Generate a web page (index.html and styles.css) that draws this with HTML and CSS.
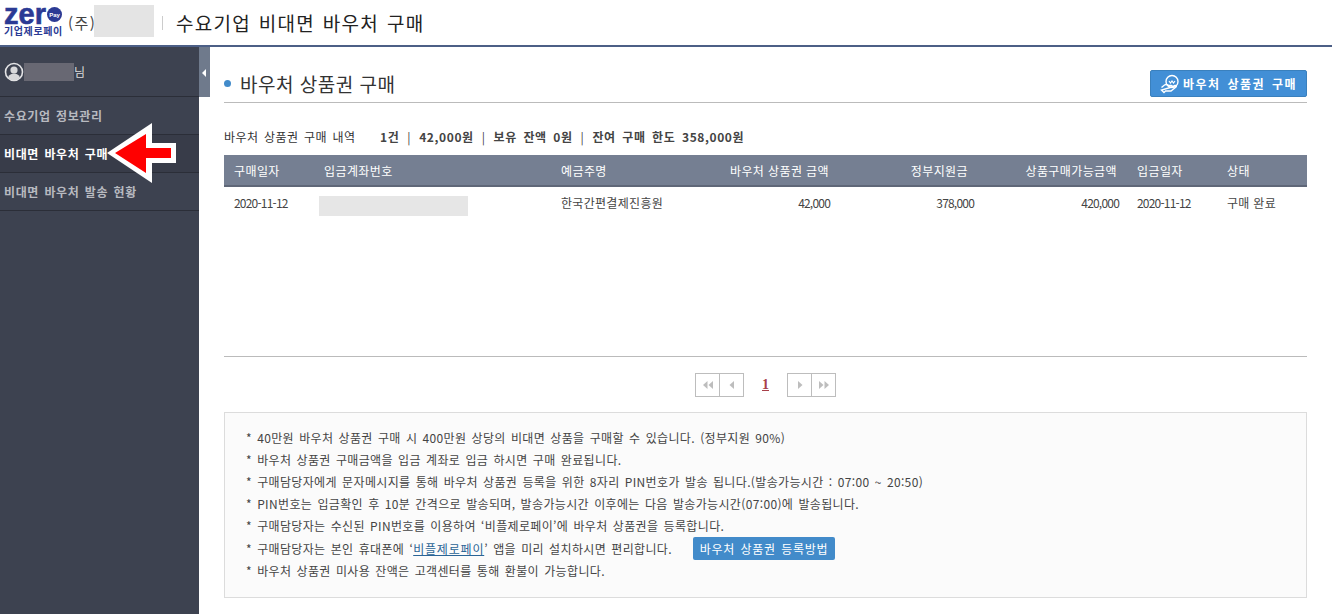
FILE: index.html
```html
<!DOCTYPE html>
<html lang="ko">
<head>
    <meta charset="UTF-8">
    <title>수요기업 비대면 바우처 구매</title>
    <link rel="stylesheet" href="styles.css">
</head>
<body>
    <div class="header">
        <div class="logo">
            <div class="logo-top">
                <span class="logo-zero">zer</span>
                <svg class="logo-pay" width="15" height="15" viewBox="0 0 15 15"><circle cx="7.500" cy="7.500" r="7.500" fill="#2b3a94"/><text x="7.500" y="9.500" font-size="6" font-weight="700" fill="#fff" text-anchor="middle" font-family="Liberation Sans">Pay</text></svg>
            </div>
            <div class="logo-sub">기업제로페이</div>
        </div>
        <div class="company">(주)<span class="company-mask"></span></div>
        <div class="header-sep"></div>
        <div class="header-title">수요기업 비대면 바우처 구매</div>
    </div>

    <div class="layout">
        <div class="sidebar">
            <div class="user">
                <svg class="user-icon" width="20" height="20" viewBox="0 0 20 20"><circle cx="10" cy="10" r="8.5" fill="#3d4250" stroke="#e4e4e6" stroke-width="1.6"/><circle cx="10" cy="8" r="3.6" fill="#d8d8da"/><path d="M4 15.5c1.2-3 3.4-4 6-4s4.800 1 6 4a8 8 0 0 1-12 0z" fill="#d8d8da"/></svg>
                <span class="user-mask"></span>
                <span class="user-suffix">님</span>
            </div>
            <div class="menu-item">수요기업 정보관리</div>
            <div class="menu-item active">비대면 바우처 구매</div>
            <div class="menu-item">비대면 바우처 발송 현황</div>
            <div class="side-toggle"><span class="toggle-arrow"></span></div>
        </div>

        <div class="main">
            <div class="title-row">
                <h1 class="page-title"><span class="title-dot"></span>바우처 상품권 구매</h1>
                <button class="buy-btn">
                    <svg width="20" height="20" viewBox="0 0 20 20" fill="none" stroke="#fff" stroke-width="1.4"><circle cx="12" cy="7.500" r="6"/><path d="M9 7l1.500 2 1.500-2 1.500 2 1.500-2" stroke-width="1.200"/><path d="M1.500 13.500l3-2.500c1.500-.8 3-.3 4 .4h3c1 0 1 1.600 0 1.600H8.500M12 13l3-1.500c1-.4 1.800.8 1 1.500l-5 4H5.500l-1.500 1.500-2.500-2.500z"/></svg>
                    바우처 상품권 구매
                </button>
            </div>

            <div class="summary">
                <span class="summary-label">바우처 상품권 구매 내역</span>
                <span class="summary-data">1건<span class="sep">|</span>42,000원<span class="sep">|</span>보유 잔액 0원<span class="sep">|</span>잔여 구매 한도 358,000원</span>
            </div>

            <div class="table-wrap">
                <table class="list-table">
                    <thead>
                        <tr>
                            <th class="col-date">구매일자</th>
                            <th class="col-account">입금계좌번호</th>
                            <th class="col-owner">예금주명</th>
                            <th class="col-amount num">바우처 상품권 금액</th>
                            <th class="col-support num">정부지원금</th>
                            <th class="col-total num">상품구매가능금액</th>
                            <th class="col-paid">입금일자</th>
                            <th class="col-state">상태</th>
                        </tr>
                    </thead>
                    <tbody>
                        <tr>
                            <td class="digits">2020-11-12</td>
                            <td><span class="account-mask"></span></td>
                            <td>한국간편결제진흥원</td>
                            <td class="num digits">42,000</td>
                            <td class="num digits">378,000</td>
                            <td class="num digits">420,000</td>
                            <td class="digits col-paid">2020-11-12</td>
                            <td class="col-state">구매 완료</td>
                        </tr>
                    </tbody>
                </table>
            </div>

            <div class="pager">
                <div class="page-group">
                    <span class="page-btn"><svg width="12" height="10" viewBox="0 0 12 10" fill="#bdbdbd"><path d="M5.500 1v8L1 5zM11 1v8L6.500 5z"/></svg></span>
                    <span class="page-btn"><svg width="12" height="10" viewBox="0 0 12 10" fill="#bdbdbd"><path d="M8 1v8L3.500 5z"/></svg></span>
                </div>
                <a class="page-num">1</a>
                <div class="page-group">
                    <span class="page-btn"><svg width="12" height="10" viewBox="0 0 12 10" fill="#bdbdbd"><path d="M4 1v8l4.500-4z"/></svg></span>
                    <span class="page-btn"><svg width="12" height="10" viewBox="0 0 12 10" fill="#bdbdbd"><path d="M1 1v8l4.500-4zM6.500 1v8L11 5z"/></svg></span>
                </div>
            </div>

            <div class="notice">
                <p>* 40만원 바우처 상품권 구매 시 400만원 상당의 비대면 상품을 구매할 수 있습니다. (정부지원 90%)</p>
                <p>* 바우처 상품권 구매금액을 입금 계좌로 입금 하시면 구매 완료됩니다.</p>
                <p>* 구매담당자에게 문자메시지를 통해 바우처 상품권 등록을 위한 8자리 PIN번호가 발송 됩니다.(발송가능시간 : 07:00 ~ 20:50)</p>
                <p>* PIN번호는 입금확인 후 10분 간격으로 발송되며, 발송가능시간 이후에는 다음 발송가능시간(07:00)에 발송됩니다.</p>
                <p>* 구매담당자는 수신된 PIN번호를 이용하여 ‘비플제로페이’에 바우처 상품권을 등록합니다.</p>
                <p class="notice-btn-row">* 구매담당자는 본인 휴대폰에 ‘<a class="notice-link">비플제로페이</a>’ 앱을 미리 설치하시면 편리합니다.<button class="guide-btn">바우처 상품권 등록방법</button></p>
                <p>* 바우처 상품권 미사용 잔액은 고객센터를 통해 환불이 가능합니다.</p>
            </div>
        </div>
    </div>

    <svg class="red-arrow" width="70" height="61" viewBox="0 0 70 61"><path d="M0 30L45 0v20h24v20H45v20z" fill="#fff"/><path d="M8 30L39 11v14h25v10H39v15z" fill="#f00"/></svg>
</body>
</html>
```

FILE: styles.css
```css
html, body {
    margin: 0;
    padding: 0;
    height: 614px;
    overflow: hidden;
}
body {
    font-family: "Noto Sans CJK KR", "Liberation Sans", sans-serif;
    background-color: #fff;
    color: #333;
    font-size: 12px;
    position: relative;
}

/* header */
.header {
    display: flex;
    align-items: center;
    height: 45px;
    border-bottom: 2px solid #4c5f86;
    box-sizing: content-box;
    margin-right: 2px;
}
.logo {
    margin-left: 4px;
    width: 60px;
    color: #2b3a94;
}
.logo-top {
    display: flex;
    align-items: center;
    height: 17px;
}
.logo-zero {
    font-family: "Liberation Sans", sans-serif;
    font-weight: 700;
    font-size: 29px;
    line-height: 17px;
    -webkit-text-stroke: 0.6px #2b3a94;
    margin-top: -5px;
}
.logo-pay {
    margin: -4px 0 0 1px;
}
.logo-sub {
    font-size: 10px;
    font-weight: 700;
    line-height: 12px;
    white-space: nowrap;
    letter-spacing: 0.6px;
}
.company {
    position: relative;
    margin-left: 4px;
    width: 94px;
    font-size: 15px;
    letter-spacing: 1.5px;
    color: #444;
    white-space: nowrap;
}
.company-mask {
    position: absolute;
    left: 26px;
    top: -7px;
    width: 60px;
    height: 32px;
    background-color: #e4e4e4;
}
.header-sep {
    width: 1px;
    height: 14px;
    background-color: #ccc;
    margin-right: 13px;
}
.header-title {
    font-size: 19px;
    letter-spacing: 1.25px;
    word-spacing: 1.3px;
    color: #222;
}

/* sidebar */
.layout {
    display: flex;
    height: 567px;
}
.sidebar {
    position: relative;
    width: 199px;
    flex-shrink: 0;
    background-color: #3d4250;
}
.user {
    display: flex;
    align-items: center;
    height: 49px;
    padding-left: 4px;
    border-bottom: 1px solid #2b2e38;
    color: #ddd;
}
.user-mask {
    width: 50px;
    height: 18px;
    background-color: #686873;
}
.user-suffix {
    font-size: 12px;
}
.menu-item {
    height: 37px;
    line-height: 37px;
    padding-left: 4px;
    border-bottom: 1px solid #2b2e38;
    color: #b8bac0;
    font-size: 12px;
    font-weight: 700;
    letter-spacing: 0.6px;
    word-spacing: 1.5px;
    white-space: nowrap;
}
.menu-item.active {
    color: #fff;
    background-color: #383c49;
}
.side-toggle {
    position: absolute;
    left: 199px;
    top: 0;
    width: 11px;
    height: 50px;
    background-color: #6f7a8c;
}
.toggle-arrow {
    position: absolute;
    left: 3px;
    top: 22px;
    border-top: 4px solid transparent;
    border-bottom: 4px solid transparent;
    border-right: 4px solid #fff;
}

/* main */
.main {
    flex-grow: 1;
    padding: 0 27px 0 25px;
}
.title-row {
    display: flex;
    justify-content: space-between;
    align-items: center;
    padding: 23px 0 5px;
    border-bottom: 1px solid #bbb;
}
.page-title {
    margin: 0;
    font-size: 19px;
    font-weight: 400;
    color: #333;
    display: flex;
    align-items: center;
    letter-spacing: 0.5px;
}
.title-dot {
    width: 7px;
    height: 7px;
    border-radius: 50%;
    background-color: #428bca;
    margin-right: 9px;
}
.buy-btn {
    display: flex;
    align-items: center;
    gap: 3px;
    height: 27px;
    width: 157px;
    padding: 0 0 0 9px;
    border: 1px solid #3a80bd;
    border-radius: 2px;
    background-color: #428fd6;
    color: #fff;
    font-family: inherit;
    font-size: 12px;
    font-weight: 700;
    letter-spacing: 1.5px;
    word-spacing: 2px;
    white-space: nowrap;
}
.summary {
    display: flex;
    margin-top: 25px;
    height: 18px;
    line-height: 18px;
    white-space: nowrap;
    color: #333;
}
.summary-label {
    width: 156px;
    letter-spacing: 0.5px;
    word-spacing: 1.5px;
}
.summary-data {
    font-weight: 700;
    color: #444;
    letter-spacing: 0.6px;
    word-spacing: 2.6px;
}
.sep {
    margin: 0 8px;
    font-weight: 400;
}
.table-wrap {
    margin-top: 9px;
    height: 201px;
    border-bottom: 1px solid #bbb;
}
.list-table {
    width: 100%;
    border-collapse: collapse;
    table-layout: fixed;
}
.list-table th {
    height: 30px;
    background-color: #757f92;
    border-bottom: 2px solid #5f6778;
    color: #fff;
    font-weight: 400;
    text-align: left;
    padding: 0 0 0 10px;
    letter-spacing: 0.4px;
    white-space: nowrap;
}
.list-table td {
    height: 30px;
    padding: 0 0 0 10px;
    color: #444;
    letter-spacing: 0.3px;
    white-space: nowrap;
}
.list-table .num {
    text-align: right;
    padding: 0;
}
.list-table .digits {
    letter-spacing: -0.8px;
}
.list-table .col-paid,
.list-table .col-state {
    padding-left: 18px;
}
.list-table th.col-amount { padding-right: 1px; }
.list-table th.col-support { padding-right: 6px; }
.list-table th.col-total { padding-right: 2px; }
.col-date { width: 80px; }
.col-account { width: 227px; }
.col-owner { width: 150px; }
.col-amount { width: 118px; }
.col-support { width: 138px; }
.col-total { width: 143px; }
.col-paid { width: 72px; }
.account-mask {
    display: block;
    width: 149px;
    height: 20px;
    margin: 8px 0 0 -5px;
    background-color: #e6e6e6;
}
.pager {
    display: flex;
    justify-content: center;
    align-items: center;
    margin-top: 16px;
    height: 24px;
}
.page-group {
    display: flex;
}
.page-btn {
    display: flex;
    align-items: center;
    justify-content: center;
    width: 23px;
    height: 22px;
    border: 1px solid #bdbdbd;
}
.page-btn + .page-btn {
    border-left: 0;
}
.page-num {
    width: 43px;
    text-align: center;
    font-family: "Liberation Serif", serif;
    font-weight: 700;
    font-size: 14px;
    color: #a8404a;
    text-decoration: underline;
}
.notice {
    margin-top: 15px;
    height: 170px;
    padding: 14px 0 0 21px;
    border: 1px solid #dcdcdc;
    background-color: #fbfbfb;
}
.notice p {
    margin: 0;
    height: 22px;
    line-height: 22px;
    color: #444;
    white-space: nowrap;
    font-size: 12px;
    letter-spacing: 0.35px;
    word-spacing: 1.5px;
}
.notice .notice-btn-row {
    height: 23px;
    line-height: 23px;
}
.notice-link {
    color: #2a6496;
    text-decoration: underline;
    letter-spacing: 0.8px;
}
.guide-btn {
    height: 23px;
    width: 142px;
    margin-left: 21px;
    padding: 0;
    border: 0;
    border-radius: 2px;
    background-color: #428bca;
    color: #fff;
    font-family: inherit;
    font-size: 12px;
    letter-spacing: 0.7px;
    word-spacing: 1.5px;
    vertical-align: top;
}

/* annotation over the menu */
.red-arrow {
    position: absolute;
    left: 107px;
    top: 123px;
}
```
